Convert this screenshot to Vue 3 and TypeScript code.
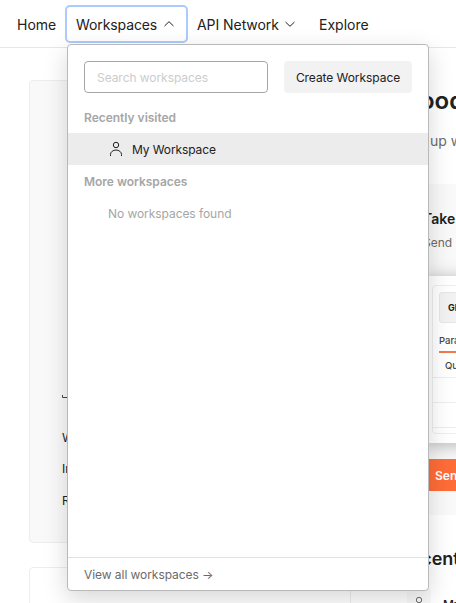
<script setup lang="ts">
import { ref } from 'vue'

const query = ref('')
const links: string[] = ['Workspaces', 'Integrations', 'Reports']
const recent: string[] = ['My Workspace']
</script>

<template>
  <div class="page">
    <header class="nav">
      <a class="nav-item home">Home</a>
      <a class="nav-item active">
        Workspaces
        <svg class="chevron" viewBox="0 0 10 6"><path d="M.5 5 5 .7 9.500 5" /></svg>
      </a>
      <a class="nav-item network">
        API Network
        <svg class="chevron" viewBox="0 0 10 6"><path d="M.5 1 5 5.300 9.500 1" /></svg>
      </a>
      <a class="nav-item">Explore</a>
    </header>

    <main class="content">
      <aside class="side">
        <section class="card team">
          <svg class="team-icon" viewBox="0 0 24 24"><path d="M.5 21v2.500h23V21" /></svg>
          <a v-for="link in links" :key="link" class="side-link">{{ link }}</a>
        </section>
        <section class="card plain"></section>
      </aside>

      <section class="main">
        <h1>Good morning</h1>
        <p class="lead">Pick up where you left off.</p>
        <article class="request">
          <h2>Take a tour</h2>
          <p class="hint">Send a request</p>
          <div class="preview">
            <div class="frame">
              <div class="method">GET</div>
              <div class="tab">Params</div>
              <div class="cell">Query</div>
              <div class="line"></div>
              <div class="line"></div>
            </div>
          </div>
          <button class="send">Send</button>
        </article>
        <h3>Recent</h3>
        <div class="recent-row">
          <span class="avatar">
            <svg class="person" viewBox="0 0 14 16"><circle cx="7" cy="4" r="2.700" /><path d="M1.500 15v-1.500a5.500 4.500 0 0 1 11 0V15" /></svg>
          </span>
          <span class="name">My Workspace</span>
        </div>
      </section>
    </main>

    <div class="menu">
      <div class="tools">
        <input v-model="query" class="search" placeholder="Search workspaces" />
        <button class="create">Create Workspace</button>
      </div>
      <div class="heading">Recently visited</div>
      <div v-for="name in recent" :key="name" class="workspace">
        <svg class="person" viewBox="0 0 14 16"><circle cx="7" cy="4" r="2.700" /><path d="M1.500 15v-1.500a5.500 4.500 0 0 1 11 0V15" /></svg>
        <span class="name">{{ name }}</span>
      </div>
      <div class="heading">More workspaces</div>
      <div class="empty">No workspaces found</div>
      <div class="footer">View all workspaces →</div>
    </div>
  </div>
</template>

<style>
body {
  overflow: hidden;
}
</style>

<style scoped>
.page,
.page * {
  box-sizing: border-box;
}
.page {
  position: relative;
  width: 456px;
  height: 603px;
  overflow: hidden;
  background: #fff;
  color: #212121;
  font: 12px/16px Inter, sans-serif;
}
h1, h2, h3, p {
  margin: 0;
  white-space: nowrap;
}
button {
  border: 0;
  padding: 0;
  font: inherit;
  color: inherit;
  letter-spacing: inherit;
}
.nav {
  display: flex;
  align-items: center;
  height: 48px;
  padding-left: 17px;
  border-bottom: 1px solid #e6e6e6;
  font-size: 14px;
  line-height: 18px;
  white-space: nowrap;
}
.nav-item {
  display: flex;
  align-items: center;
  padding-top: 2px;
}
.home {
  width: 48px;
}
.active {
  width: 123px;
  height: 38px;
  padding-left: 9px;
  border: 2px solid #abcbfa;
  border-radius: 5px;
  letter-spacing: -0.1px;
}
.network {
  width: 122px;
  margin-left: 9px;
  letter-spacing: -0.06px;
}
.chevron {
  width: 10px;
  height: 6px;
  margin: 0 0 2px 6.500px;
  fill: none;
  stroke: #212121;
}
.content {
  display: flex;
  align-items: flex-start;
  padding: 32px 0 0 29px;
}
.side {
  flex: none;
  width: 322px;
}
.card {
  border: 1px solid #ededed;
  border-radius: 4px;
}
.team {
  height: 463px;
  padding: 293px 0 0 32px;
  background: #f9f9f9;
}
.team-icon {
  display: block;
  width: 24px;
  height: 24px;
  margin-bottom: 24px;
  fill: none;
  stroke: #444;
}
.side-link {
  display: block;
  height: 31px;
  line-height: 32px;
}
.side-link:last-child {
  padding-top: 1px;
}
.plain {
  height: 80px;
  margin-top: 24px;
}
.main {
  flex: none;
  width: 400px;
  padding-left: 48px;
}
h1 {
  padding: 5px 0 0 3px;
  font-size: 24px;
  line-height: 32px;
  font-weight: 600;
}
.lead {
  margin: 14px 0 0 -1px;
  color: #6b6b6b;
  font-size: 14px;
  line-height: 20px;
}
.request {
  height: 331px;
  margin-top: 33px;
  padding: 25px 24px 0;
  background: #f9f9f9;
}
h2 {
  font-size: 14px;
  line-height: 20px;
  font-weight: 600;
}
.hint {
  margin-top: 6px;
  color: #6b6b6b;
  word-spacing: 2px;
}
.preview {
  height: 167px;
  margin-top: 25px;
  padding: 9px 0 0 9px;
  background: #fff;
  box-shadow: 0 2px 16px rgba(0, 0, 0, 0.28);
}
.frame {
  height: 149px;
  padding: 6px 0 0 6px;
  border: 1px solid #ededed;
  border-radius: 4px;
  color: #444;
  font-size: 9.500px;
  font-weight: 500;
}
.method {
  height: 31px;
  padding-left: 8px;
  border: 1px solid #e6e6e6;
  border-radius: 3px;
  background: #f2f2f2;
  color: #212121;
  font-size: 9px;
  font-weight: 700;
  line-height: 30px;
}
.tab {
  width: 40px;
  height: 30px;
  border-bottom: 2px solid #ef7a4c;
  line-height: 36px;
}
.cell {
  height: 25px;
  margin-left: -6px;
  padding-left: 12px;
  border-bottom: 1px solid #ededed;
  line-height: 25px;
}
.line {
  height: 25px;
  margin-left: -6px;
  border-bottom: 1px solid #ededed;
}
.send {
  display: block;
  width: 100px;
  height: 32px;
  margin-top: 16px;
  padding: 1px 0 0 12px;
  background: #ff6c37;
  color: #fff;
  font-weight: 600;
  text-align: left;
}
h3 {
  margin-top: 32px;
  font-size: 18px;
  line-height: 24px;
  font-weight: 600;
}
.recent-row {
  display: flex;
  align-items: center;
  gap: 12px;
  margin-top: 17px;
  padding-left: 8px;
  font-weight: 500;
  white-space: nowrap;
}
.avatar {
  display: grid;
  place-items: center;
  width: 24px;
  height: 32px;
  border-radius: 4px;
  background: #f9f9f9;
}
.person {
  width: 14px;
  height: 16px;
  fill: none;
  stroke: #212121;
}
.avatar .person {
  stroke: #6b6b6b;
}
.menu {
  position: absolute;
  left: 67px;
  top: 44px;
  display: flex;
  flex-direction: column;
  width: 362px;
  height: 547px;
  border: 1px solid #b9b9b9;
  border-radius: 4px;
  background: #fff;
  box-shadow: 0 8px 24px rgba(0, 0, 0, 0.16);
  letter-spacing: -0.06px;
}
.tools {
  display: flex;
  justify-content: space-between;
  padding: 16px 16px 8px;
}
.search {
  width: 184px;
  height: 32px;
  padding: 1px 12px 0;
  border: 1px solid #a6a6a6;
  border-radius: 4px;
  outline: 0;
  background: #fff;
  font: inherit;
  letter-spacing: inherit;
}
.search::placeholder {
  color: #ccc;
}
.create {
  width: 128px;
  height: 32px;
  padding-top: 2px;
  border-radius: 4px;
  background: #f2f2f2;
}
.heading {
  height: 32px;
  padding-left: 16px;
  color: #a6a6a6;
  font-weight: 600;
  line-height: 34px;
  letter-spacing: -0.02px;
}
.workspace {
  display: flex;
  align-items: center;
  gap: 9px;
  height: 32px;
  padding-left: 41px;
  background: #ececec;
  letter-spacing: -0.1px;
}
.name {
  padding-top: 2px;
}
.empty {
  padding-left: 40px;
  color: #a6a6a6;
  line-height: 34px;
}
.footer {
  height: 33px;
  margin-top: auto;
  padding-left: 16px;
  border-top: 1px solid #e1e1e1;
  color: #6b6b6b;
  line-height: 33px;
}
</style>
